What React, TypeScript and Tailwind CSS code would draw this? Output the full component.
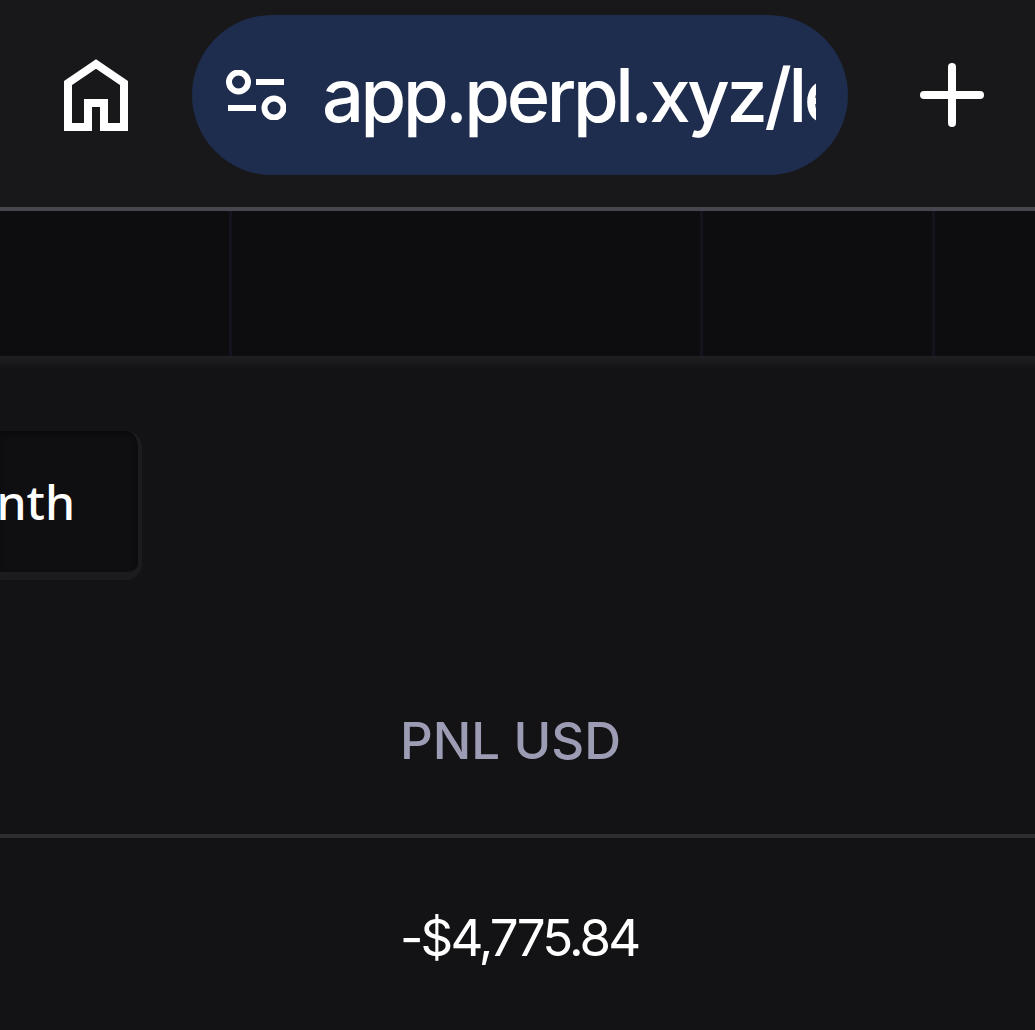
import React from "react";

const HomeIcon = () => (
  <svg width="64" height="72" viewBox="0 0 64 72" fill="none" stroke="white" strokeWidth="8">
    <path d="M4 68V24L32 5L60 24V68H40V44H24V68Z" />
  </svg>
);

const SiteSettingsIcon = () => (
  <svg width="60" height="50" viewBox="0 0 60 50" fill="none" stroke="white" strokeWidth="6">
    <circle cx="12.5" cy="12" r="9.5" />
    <path d="M30 12H58" />
    <path d="M2 38H30" />
    <circle cx="48" cy="38" r="9.5" />
  </svg>
);

const PlusIcon = () => (
  <svg width="64" height="64" viewBox="0 0 64 64" fill="none" stroke="white" strokeWidth="8" strokeLinecap="round">
    <path d="M4 32H60" />
    <path d="M32 4V60" />
  </svg>
);

const App: React.FC = () => {
  return (
    <div className="w-[1035px] h-[1030px] overflow-hidden bg-[#131315] font-['Inter',sans-serif] text-white">
      {/* browser bar */}
      <div className="h-[207px] bg-[#18181a] flex items-start">
        <div className="w-[192px] h-[190px] flex items-center justify-center">
          <HomeIcon />
        </div>
        <div className="mt-[15px] w-[656px] h-[160px] rounded-[80px] bg-[#1e2d4d] flex items-center pl-[34px] pr-[32px]">
          <SiteSettingsIcon />
          <div className="ml-[36px] flex-1 overflow-hidden whitespace-nowrap text-[74px] leading-[90px] font-medium tracking-[-3.4px]">
            app.perpl.xyz/leaderboard
          </div>
        </div>
        <div className="flex-1 h-[190px] flex items-center justify-center pl-[21px]">
          <PlusIcon />
        </div>
      </div>
      <div className="h-[4px] bg-[#47464f]" />

      {/* dark strip */}
      <div className="h-[145px] bg-[#0d0d10] flex">
        <div className="w-[232px] border-r-[3px] border-[#14141f]" />
        <div className="w-[471px] border-r-[3px] border-[#14141f]" />
        <div className="w-[232px] border-r-[3px] border-[#14141f]" />
      </div>

      {/* table panel */}
      <div className="h-[14px] bg-linear-to-b from-[#1f1f21] to-[#131315]" />
      <div className="pt-[61px]">
        <div className="w-[142px] h-[149px] overflow-hidden rounded-r-[16px] bg-[#0f0f11] border-r-[4px] border-b-[8px] border-[#1c1c1e] shadow-[inset_0_4px_6px_rgba(0,0,0,0.3)] flex items-center justify-end pr-[63px]">
          <span className="text-[48px] font-medium whitespace-nowrap font-['Noto_Sans',sans-serif]">Month</span>
        </div>
        <div className="h-[258px] pl-[400px] flex flex-col justify-end border-b-[4px] border-[#2e2e30] pb-[67px]">
          <span className="text-[51px] leading-[52px] font-medium tracking-[-0.05px] text-[#9d9cb5]">PNL USD</span>
        </div>
        <div className="pl-[400px] pt-[70px] text-[51px] leading-[60px] tracking-[-2.9px]">-$4,775.84</div>
      </div>
    </div>
  );
};

export default App;
